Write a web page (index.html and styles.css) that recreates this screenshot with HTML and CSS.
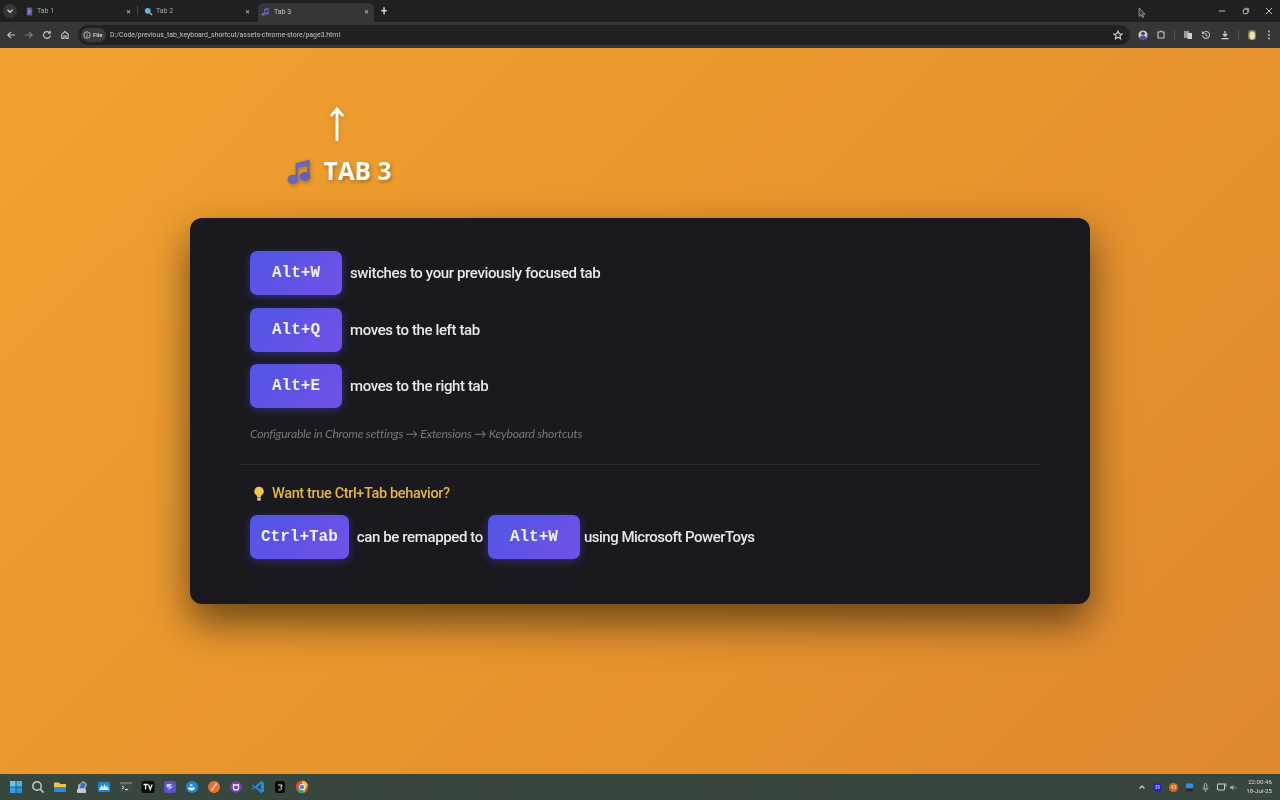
FILE: index.html
```html
<!DOCTYPE html>
<html lang="en">
<head>
<meta charset="utf-8">
<title>Tab 3</title>
<link rel="stylesheet" href="styles.css">
</head>
<body>
<div class="screen">
  <header class="browser">
    <div class="tabstrip">
      <button class="tab-search"><svg width="8" height="8" viewBox="0 0 8 8"><path d="M1.5 2.8 4 5.3l2.5-2.5" fill="none" stroke="#d8d8d8" stroke-width="1.3"/></svg></button>
      <div class="tab first">
        <svg class="favicon" viewBox="0 0 10 10"><rect x="2" y="0.5" width="6" height="9" rx="1" fill="#4a5ec4"/><path d="M3.5 1v8L7 5z" fill="#c66ba0"/></svg>
        <span class="tab-title">Tab 1</span>
        <span class="tab-close">✕</span>
      </div>
      <div class="tab-sep"></div>
      <div class="tab">
        <svg class="favicon" viewBox="0 0 10 10"><circle cx="4.2" cy="4.2" r="3.2" fill="#5cb8e8"/><path d="M6.5 6.5 9 9" stroke="#d8a86a" stroke-width="1.6"/></svg>
        <span class="tab-title">Tab 2</span>
        <span class="tab-close">✕</span>
      </div>
      <div class="tab active">
        <svg class="favicon" viewBox="0 0 20 20"><use href="#music"/></svg>
        <span class="tab-title">Tab 3</span>
        <span class="tab-close">✕</span>
      </div>
      <span class="new-tab">+</span>
      <div class="window-controls">
        <svg width="8" height="8" viewBox="0 0 9 9"><path d="M1 4.5h7" stroke="#cfcfcf"/></svg>
        <svg width="8" height="8" viewBox="0 0 9 9"><rect x="1.5" y="2.5" width="5" height="5" rx="1" fill="none" stroke="#cfcfcf"/><path d="M3 1.5h4.5V6" fill="none" stroke="#cfcfcf" stroke-width=".8"/></svg>
        <svg width="8" height="8" viewBox="0 0 9 9"><path d="m1 1 7 7M8 1 1 8" stroke="#d8d8d8"/></svg>
      </div>
    </div>
    <div class="toolbar">
      <div class="nav-icons">
        <svg width="10" height="10" viewBox="0 0 10 10"><path d="M9 5H2M5 1.800 1.800 5 5 8.200" fill="none" stroke="#c4c4c4" stroke-width="1.200"/></svg>
        <svg width="10" height="10" viewBox="0 0 10 10"><path d="M1 5h7M5 1.800 8.200 5 5 8.200" fill="none" stroke="#7a7a7a" stroke-width="1.200"/></svg>
        <svg width="10" height="10" viewBox="0 0 10 10"><path d="M8.300 5.500A3.400 3.400 0 1 1 7.200 2.400M8.300 .8v2.400H5.900" fill="none" stroke="#c4c4c4" stroke-width="1.200"/></svg>
        <svg width="10" height="10" viewBox="0 0 10 10"><path d="M1.800 4.300 5 1.500l3.200 2.800v4.200H6V6H4v2.500H1.800z" fill="none" stroke="#c4c4c4" stroke-width="1.100"/></svg>
      </div>
      <div class="omnibox">
        <div class="chip">
          <svg width="8" height="8" viewBox="0 0 10 10"><circle cx="5" cy="5" r="4" fill="none" stroke="#cfcfcf"/><path d="M5 4.400v3M5 2.400v1" stroke="#cfcfcf"/></svg>
          <span>File</span>
        </div>
        <span class="url">D:/Code/previous_tab_keyboard_shortcut/assets-chrome-store/page3.html</span>
        <svg class="star" width="10" height="10" viewBox="0 0 10 10"><path d="m5 1 1.200 2.700 2.900.3-2.200 1.900.7 2.900L5 7.300 2.400 8.800l.7-2.900L.9 4l2.900-.3z" fill="none" stroke="#d4d4d4" stroke-width="1.100"/></svg>
      </div>
      <div class="tool-icons">
        <svg class="ti-avatar" width="10" height="10" viewBox="0 0 10 10"><circle cx="5" cy="5" r="4.600" fill="#c9c9d2"/><circle cx="5" cy="3.600" r="1.900" fill="#53415a"/><path d="M1.500 8a3.600 3 0 0 1 7 0 4.600 4.600 0 0 1-7 0" fill="#3f4fa8"/></svg>
        <svg class="ti-ext" width="10" height="10" viewBox="0 0 10 10"><path d="M2 2h2a1 1 0 0 1 2 0h2v6H2z" fill="none" stroke="#c4c4c4" stroke-width="1.100"/></svg>
        <span class="tool-sep"></span>
        <svg class="ti-translate" width="10" height="10" viewBox="0 0 10 10"><rect x="1" y="1" width="5" height="7" fill="#9a9a9a"/><rect x="4.500" y="3" width="4.500" height="6" fill="#d0d0d0"/></svg>
        <svg class="ti-hist" width="10" height="10" viewBox="0 0 10 10"><path d="M1.600 5a3.500 3.500 0 1 0 1-2.500L1.500 3.500M1.500 1.500v2h2M5 3v2.200l1.500 1" fill="none" stroke="#bdbdbd" stroke-width="1.050"/></svg>
        <svg class="ti-down" width="10" height="10" viewBox="0 0 10 10"><path d="M5 1v5M2.800 4 5 6.200 7.200 4M1.500 8.700h7" fill="none" stroke="#d0d0d0" stroke-width="1.200"/></svg>
        <span class="tool-sep second"></span>
        <svg class="ti-profile" width="10" height="12" viewBox="0 0 10 12"><rect x="1" y="1" width="8" height="10" rx="3" fill="#8a7a50"/><ellipse cx="5.200" cy="6.500" rx="2.800" ry="4" fill="#efe3b0"/></svg>
        <svg class="ti-more" width="4" height="10" viewBox="0 0 4 10"><circle cx="2" cy="1.500" r=".9" fill="#c4c4c4"/><circle cx="2" cy="5" r=".9" fill="#c4c4c4"/><circle cx="2" cy="8.500" r=".9" fill="#c4c4c4"/></svg>
      </div>
    </div>
  </header>

  <main class="page">
    <div class="hero">
      <svg class="hero-arrow" width="20" height="40" viewBox="0 0 20 40"><path d="M10 36V4M4 11 10 4l6 7" fill="none" stroke="#fff" stroke-width="2.800"/></svg>
      <div class="hero-title">
        <svg class="hero-note" viewBox="0 0 20 20"><use href="#music"/></svg>
        <h1>TAB 3</h1>
      </div>
    </div>
    <section class="card">
      <div class="shortcuts">
        <div class="row"><kbd class="key">Alt+W</kbd><span class="desc">switches to your previously focused tab</span></div>
        <div class="row"><kbd class="key">Alt+Q</kbd><span class="desc">moves to the left tab</span></div>
        <div class="row"><kbd class="key">Alt+E</kbd><span class="desc">moves to the right tab</span></div>
        <p class="note">Configurable in Chrome settings → Extensions → Keyboard shortcuts</p>
      </div>
      <div class="tip">
        <h2 class="tip-title">
          <svg class="bulb" width="12" height="16" viewBox="0 0 12 16"><path d="M6 .8a4.600 4.600 0 0 0-2.800 8.300c.7.6 1 1.500 1 2.500h3.600c0-1 .3-1.900 1-2.500A4.600 4.600 0 0 0 6 .8z" fill="#f6c545"/><rect x="4.200" y="11.800" width="3.600" height="3" rx=".8" fill="#c9c2b4"/></svg>
          <span>Want true Ctrl+Tab behavior?</span>
        </h2>
        <div class="tip-row">
          <kbd class="key">Ctrl+Tab</kbd>
          <span class="desc can">can be remapped to</span>
          <kbd class="key">Alt+W</kbd>
          <span class="desc using">using Microsoft PowerToys</span>
        </div>
      </div>
    </section>
  </main>

  <footer class="taskbar">
    <div class="task-icons">
      <svg viewBox="0 0 14 14"><rect x="1" y="1" width="5.600" height="5.600" fill="#5ac8f5"/><rect x="7.400" y="1" width="5.600" height="5.600" fill="#43b6ee"/><rect x="1" y="7.400" width="5.600" height="5.600" fill="#2f9fe6"/><rect x="7.400" y="7.400" width="5.600" height="5.600" fill="#2a8fdc"/></svg>
      <svg viewBox="0 0 14 14"><circle cx="6" cy="6" r="4.200" fill="none" stroke="#c9d0cb" stroke-width="1.400"/><path d="m9 9 3.600 3.600" stroke="#c9d0cb" stroke-width="1.500"/></svg>
      <svg viewBox="0 0 14 14"><path d="M1 2.500h5l1.500 1.500H13v8H1z" fill="#f4c53f"/><rect x="1" y="7" width="12" height="5" fill="#2c8ad8"/></svg>
      <svg viewBox="0 0 14 14"><path d="M3 5 8 1l4 3-2 6H3z" fill="#aeb6c8"/><path d="M6 2l5 2-2 4H5z" fill="#3d6fc9"/><rect x="2" y="9" width="9" height="4" rx="1" fill="#c6cad0"/></svg>
      <svg viewBox="0 0 14 14"><rect x="1" y="2" width="12" height="10" rx="1.500" fill="#1f86d4"/><path d="m2 10 2.500-5L6 7.500 7.500 4 9 7.500 10 5l2 5z" fill="#d9eefc"/></svg>
      <svg viewBox="0 0 14 14"><rect x="1" y="2" width="12" height="10" fill="#43474a"/><rect x="1" y="2" width="12" height="2.200" fill="#6b7073"/><path d="m3 6 2 1.500L3 9M6 9.500h3" fill="none" stroke="#e4e4e4"/></svg>
      <svg viewBox="0 0 14 14"><rect x=".5" y="1" width="13" height="12" rx="2.500" fill="#0c0c0c"/><path d="M2.500 4.500h4.300M4.600 4.500v5M7.500 4.500l1.700 5 2-5" fill="none" stroke="#f4f4f4" stroke-width="1.300"/></svg>
      <svg viewBox="0 0 14 14"><rect x="1" y="1" width="12" height="12" rx="2.500" fill="#5a50c8"/><path d="M3.500 4h6l-3 2.500h4l-6 4 2-3H3.500z" fill="#c9c5ef"/></svg>
      <svg viewBox="0 0 14 14"><circle cx="7" cy="7" r="6" fill="#1e88d4"/><path d="M3 7.500h7c0 2-1.500 3-3.500 3S3 9.500 3 7.500zM5 6V4.500h2.500V6z" fill="#f2f8fc"/></svg>
      <svg viewBox="0 0 14 14"><circle cx="7" cy="7" r="6" fill="#e8702a"/><path d="M4.500 10.500 9.500 3.500" stroke="#f7dcc5" stroke-width="1.300"/></svg>
      <svg viewBox="0 0 14 14"><circle cx="7" cy="7" r="6" fill="#6e40a8"/><path d="M4.500 4.500 5.500 5h3l1-.5V8c0 1.200-1 2-2.500 2S4.500 9.200 4.500 8z" fill="none" stroke="#f0e9f8" stroke-width="1.300"/></svg>
      <svg viewBox="0 0 14 14"><path d="M10 1 13 2.500v9L10 13 4 7.500 1.800 9.500.8 8.800 3 7 .8 5.200l1-.7L4 6.500z" fill="#1f8fe0"/><path d="M10 4 6 7l4 3z" fill="#37464a"/></svg>
      <svg viewBox="0 0 14 14"><rect x="2" y="1" width="10" height="12" rx="2.500" fill="#0a0a0a"/><path d="M5 5h4v1.200L7.500 7.200 9 8.500 7.500 10H5.500" fill="none" stroke="#e4e4e4"/></svg>
      <svg viewBox="0 0 14 14"><circle cx="7" cy="7" r="6.200" fill="#dd4b3e"/><path d="M7 7 1.700 10.200A6.200 6.200 0 0 0 9 12.900z" fill="#3aa757"/><path d="M7 .8A6.200 6.200 0 0 1 12.700 4.600L9 12.900 7 7z" fill="#f6c02c"/><circle cx="7" cy="7" r="2.900" fill="#fff"/><circle cx="7" cy="7" r="2.200" fill="#4285f4"/></svg>
    </div>
    <div class="tray">
      <svg width="8" height="8" viewBox="0 0 8 8"><path d="m1.500 5.500 2.500-2.500 2.500 2.500" fill="none" stroke="#d0d6d2" stroke-width="1.100"/></svg>
      <span class="badge blue">39</span>
      <span class="badge orange">43</span>
      <svg width="9" height="9" viewBox="0 0 9 9"><rect x="1" y="0.500" width="7" height="5" fill="#2f8fd8"/><rect x="1" y="5.500" width="7" height="3" fill="#2a2a2a"/></svg>
      <svg width="9" height="9" viewBox="0 0 9 9"><rect x="3.200" y=".5" width="2.600" height="5.200" rx="1.300" fill="none" stroke="#aeb6b0"/><path d="M2 4.500a2.500 2.500 0 0 0 5 0M4.500 7v2" fill="none" stroke="#aeb6b0" stroke-width=".8"/></svg>
      <svg class="t-mon" width="10" height="9" viewBox="0 0 10 9"><rect x=".5" y="1" width="7" height="6" rx=".5" fill="none" stroke="#d0d6d2"/><path d="M7 1.500 9 .5V4" fill="none" stroke="#d0d6d2" stroke-width=".7"/></svg>
      <svg class="t-vol" width="9" height="9" viewBox="0 0 9 9"><path d="M1 3.500h1.500L4.500 2v5L2.500 5.500H1z" fill="#aeb6b0"/><path d="M6 3a2 2 0 0 1 0 3" fill="none" stroke="#858e88"/></svg>
      <div class="clock"><span>22:00:46</span><span>18-Jul-25</span></div>
    </div>
  </footer>

  <svg class="cursor" width="8" height="12" viewBox="0 0 8 12"><path d="M1 .8v8.700l2-1.800 1.300 3 1.300-.6L4.300 7.200H7z" fill="#3a3a3a" stroke="#b5b5b5" stroke-width=".7"/></svg>
</div>

<svg class="defs" width="0" height="0">
  <defs>
    <symbol id="music" viewBox="0 0 20 20">
      <path d="M6.800 4.300 17 1.800v12.700h-1.900V6.100L8.700 7.700v9H6.800z" fill="#6a66b8"/>
      <ellipse cx="5" cy="16" rx="3.900" ry="3.300" fill="#6a66b8"/>
      <ellipse cx="13.400" cy="14" rx="3.800" ry="3.200" fill="#6460b4"/>
    </symbol>
  </defs>
</svg>
</body>
</html>
```
FILE: styles.css
```css
* { box-sizing: border-box; }
html, body { margin: 0; height: 100%; overflow: hidden; }
body { font-family: Roboto, "Open Sans", sans-serif; background: #202020; }

.screen { position: relative; width: 1280px; height: 800px; display: flex; flex-direction: column; }
.defs { position: absolute; }

/* Browser chrome */
.browser { height: 48px; flex: none; display: flex; flex-direction: column; filter: blur(0.5px); }
.tabstrip { height: 22px; background: #1f2120; display: flex; align-items: stretch; padding: 3px 0 0 3px; }
.tab-search { width: 14px; height: 14px; margin-top: 1px; margin-right: 8px; padding: 0; border: 0; border-radius: 7px; background: #353636; display: flex; align-items: center; justify-content: center; }
.tab { width: 109px; display: flex; align-items: center; padding: 0 3px 3px 0; color: #a8a8a8; font-size: 7px; }
.tab.first { width: 109px; }
.tab .favicon { margin-right: 3px; }
.tab-sep { width: 1px; height: 9px; margin: 3px 6px 0 3px; background: #4a4a4a; }
.tab.active { width: 116px; margin-left: 5px; padding: 0 5px 2px 3px; background: #353635; border-radius: 6px 6px 0 0; color: #c8c8c8; }
.tab.active .favicon { margin-right: 4px; }
.favicon { width: 9px; height: 9px; flex: none; }
.tab-title { flex: 1; }
.tab-close { font-size: 6px; color: #d0d0d0; font-family: "DejaVu Sans", sans-serif; }
.new-tab { width: 20px; padding-top: 1px; text-align: center; color: #dcdcdc; font-size: 12px; line-height: 15px; font-weight: 500; }
.window-controls { margin-left: auto; display: flex; align-items: flex-start; padding-top: 4px; margin-right: 7px; gap: 15.500px; }

.toolbar { height: 26px; background: #353635; display: flex; align-items: center; padding: 0 6px 1px 6px; }
.nav-icons { display: flex; gap: 8px; margin-right: 8px; }
.omnibox { width: 1052px; height: 20px; border-radius: 10px; background: #202121; display: flex; align-items: center; padding: 0 7px 0 3px; }
.chip { height: 14px; width: 25px; margin-right: 4px; border-radius: 7px; background: #3a3b3b; display: flex; align-items: center; gap: 2px; padding-left: 2px; color: #dcdcdc; font-size: 6px; font-weight: 500; }
.url { color: #c4c4c4; font-size: 6.900px; flex: 1; white-space: nowrap; padding-top: 1px; }
.star { flex: none; }
.tool-icons { flex: 1; display: flex; align-items: center; padding-left: 8px; }
.ti-ext { margin-left: 8px; }
.tool-sep { width: 1px; height: 10px; margin: 0 8px 0 8px; background: #4e4f4e; }
.tool-sep.second { margin: 0 8px 0 8px; }
.ti-hist { margin-left: 8px; }
.ti-down { margin-left: 9px; }
.ti-more { margin-left: 10px; }

/* Page */
.page { flex: 1; min-height: 0; background: linear-gradient(135deg, #f1a22e 0%, #de892f 100%); padding: 57px 0 0 190px; display: flex; flex-direction: column; filter: blur(0.35px); }
.hero { width: 294px; display: flex; flex-direction: column; align-items: center; }
.hero-arrow { filter: drop-shadow(0 1px 3px rgba(0, 0, 0, .2)); }
.hero-title { display: flex; align-items: center; gap: 10px; margin-top: 8px; height: 36px; padding-left: 3px; }
.hero-note { width: 28px; height: 28px; filter: drop-shadow(1px 2px 2px rgba(0, 0, 0, .25)); }
.hero-title h1 { margin: 0; color: #fff; font-family: "Open Sans", sans-serif; font-size: 24.500px; font-weight: 700; line-height: 36px; text-shadow: 1px 2px 4px rgba(0, 0, 0, .3); }

.card { width: 900px; height: 386px; margin-top: 29px; padding: 33px 50px 0; background: #19191e; border-radius: 12px; box-shadow: 0 18px 40px rgba(0, 0, 0, .55); }
.shortcuts { padding: 0 10px 21px; border-bottom: 1px solid #2c2c31; display: flex; flex-direction: column; gap: 12.500px; }
.row { display: flex; align-items: center; gap: 8px; height: 44px; }
.key { display: inline-flex; align-items: center; justify-content: center; min-width: 92px; height: 44px; padding: 0 11px; border-radius: 7px; background: linear-gradient(135deg, #4f56e6, #7350e8); color: #f2f2f8; font-family: "Liberation Mono", monospace; font-weight: 700; font-size: 16px; box-shadow: 0 2px 10px rgba(86, 78, 230, .42); }
.desc { color: #e8e8ea; font-size: 15px; font-weight: 500; letter-spacing: -.38px; white-space: nowrap; }
.note { margin: 3px 0 0; color: #76767c; font-family: Lato, sans-serif; font-size: 12.200px; font-style: italic; letter-spacing: -.26px; height: 19px; line-height: 19px; }

.tip { padding: 19px 10px 0; }
.tip-title { margin: 0; display: flex; align-items: center; gap: 7px; height: 20px; color: #eab53f; font-size: 14.500px; font-weight: 500; letter-spacing: -.36px; }
.bulb { margin-left: 3px; }
.tip-row { margin-top: 11px; display: flex; align-items: center; height: 44px; }
.can { margin: 0 5px 0 8px; }
.using { margin-left: 4px; letter-spacing: -.5px; }

/* Taskbar */
.taskbar { height: 26px; flex: none; background: #38473d; display: flex; align-items: center; justify-content: space-between; padding: 0 8px 0 9px; filter: blur(0.5px); }
.task-icons { display: flex; gap: 8px; }
.task-icons svg { width: 14px; height: 14px; }
.tray { display: flex; align-items: center; gap: 7px; }
.badge { width: 9px; height: 9px; border-radius: 50%; color: #e8e8e8; font-size: 4.500px; line-height: 9px; text-align: center; }
.badge.blue { background: #2224c4; }
.badge.orange { background: #d66a1d; }
.t-vol { margin-left: -5px; }
.clock { width: 24px; margin-left: 3px; display: flex; flex-direction: column; align-items: flex-end; color: #d6dcd8; font-size: 6.200px; line-height: 9px; white-space: nowrap; }

.cursor { position: absolute; left: 1138px; top: 7px; filter: blur(.4px); }
```
